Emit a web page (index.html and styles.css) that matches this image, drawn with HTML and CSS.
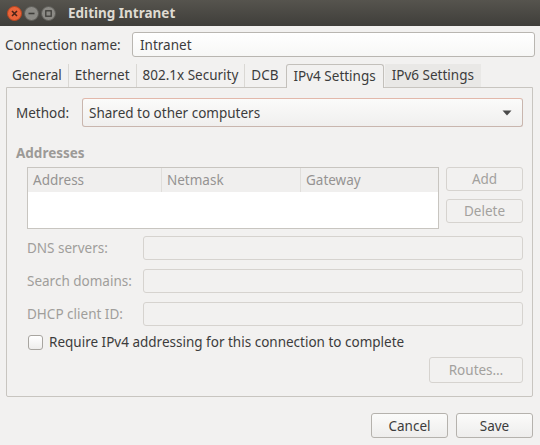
FILE: index.html
```html
<!DOCTYPE html>
<html lang="en">
  <head>
    <meta charset="UTF-8" />
    <title>Editing Intranet</title>
    <link rel="stylesheet" href="styles.css">
  </head>
  <body>
    <div class="window">
      <div class="titlebar">
        <div class="wm_buttons">
          <svg width="15" height="15" viewBox="0 0 15 15">
            <circle cx="7.5" cy="7.5" r="7" fill="#e9643a" stroke="#b9461f" />
            <path d="M5 5l5 5M10 5l-5 5" stroke="#4a2418" stroke-width="1.6" />
          </svg>
          <svg width="15" height="15" viewBox="0 0 15 15">
            <circle cx="7.5" cy="7.5" r="7" fill="#8b8a85" stroke="#5d5c57" />
            <path d="M4.5 7.5h6" stroke="#3e3d39" stroke-width="1.6" />
          </svg>
          <svg width="15" height="15" viewBox="0 0 15 15">
            <circle cx="7.5" cy="7.5" r="7" fill="#8b8a85" stroke="#5d5c57" />
            <rect x="4.8" y="4.8" width="5.4" height="5.4" fill="none" stroke="#3e3d39" stroke-width="1.3" />
          </svg>
        </div>
        <div class="title">Editing Intranet</div>
      </div>

      <div class="body">
        <div class="name_row">
          <span class="label">Connection name:</span>
          <div class="entry">Intranet</div>
        </div>

        <div class="tabs">
          <span class="tab">General</span>
          <span class="tab">Ethernet</span>
          <span class="tab">802.1x Security</span>
          <span class="tab last">DCB</span>
          <span class="tab active">IPv4 Settings</span>
          <span class="tab shaded">IPv6 Settings</span>
        </div>

        <div class="panel">
          <div class="method_row">
            <span class="label">Method:</span>
            <div class="combo">
              <span>Shared to other computers</span>
              <svg width="10" height="6" viewBox="0 0 10 6">
                <path d="M0.5 0.5h9l-4.5 5z" fill="#4a4a4a" />
              </svg>
            </div>
          </div>

          <div class="section_title">Addresses</div>

          <div class="addr_row">
            <div class="addr_table">
              <div class="addr_head">
                <span>Address</span>
                <span>Netmask</span>
                <span>Gateway</span>
              </div>
            </div>
            <div class="addr_buttons">
              <div class="btn disabled">Add</div>
              <div class="btn disabled">Delete</div>
            </div>
          </div>

          <div class="fields">
            <span class="dim">DNS servers:</span>
            <div class="entry disabled"></div>
            <span class="dim">Search domains:</span>
            <div class="entry disabled"></div>
            <span class="dim">DHCP client ID:</span>
            <div class="entry disabled"></div>
          </div>

          <div class="check_row">
            <span class="checkbox"></span>
            <span>Require IPv4 addressing for this connection to complete</span>
          </div>

          <div class="routes_row">
            <div class="btn disabled routes">Routes…</div>
          </div>
        </div>

        <div class="actions">
          <div class="btn">Cancel</div>
          <div class="btn">Save</div>
        </div>
      </div>
    </div>
  </body>
</html>
```

FILE: styles.css
```css
*,
*::before,
*::after {
  box-sizing: border-box;
}
html,
body {
  margin: 0;
  padding: 0;
}
body {
  font-family: "Noto Sans", "Open Sans", sans-serif;
  font-size: 13.5px;
  color: #3c3c3c;
  background: #f2f1f0;
}

.window {
  width: 540px;
  height: 445px;
  background: #f2f1f0;
}

.titlebar {
  height: 26px;
  background: linear-gradient(#56544e, #3f3e3a);
  display: flex;
  align-items: center;
  padding-left: 7px;
}
.wm_buttons {
  display: flex;
  gap: 2px;
}
.wm_buttons svg {
  display: block;
}
.title {
  margin-left: 12px;
  color: #dfdbd2;
  font-weight: bold;
  font-size: 13.5px;
}

.body {
  padding: 6px 5px 0 5px;
}

.name_row {
  display: flex;
  align-items: center;
}
.name_row .label {
  width: 127px;
}
.entry {
  flex: 1;
  height: 25px;
  border: 1px solid #b9b6b1;
  border-radius: 3px;
  background: linear-gradient(#ffffff, #f7f7f6);
  padding: 0 7px;
  display: flex;
  align-items: center;
}
.entry.disabled {
  background: #f2f1f0;
  border-color: #d6d3cf;
  height: 24px;
}

.tabs {
  display: flex;
  align-items: flex-end;
  height: 30px;
  padding-left: 1px;
}
.tab {
  padding: 0 6px;
  height: 23px;
  line-height: 22px;
  border-right: 1px solid #dad8d4;
}
.tab.last {
  border-right: none;
  margin-right: 1px;
}
.tab.active {
  border: 1px solid #c3c0bb;
  border-bottom: none;
  border-radius: 3px 3px 0 0;
  background: #f2f1f0;
  padding: 0 7px;
  position: relative;
  top: 1px;
  height: 24px;
}
.tab.shaded {
  border-right: none;
  background: #e9e8e6;
  padding: 0 7px;
  margin-left: 1px;
}

.panel {
  margin: 0 2px 0 1px;
  border: 1px solid #c8c5c0;
  border-radius: 0 0 2px 2px;
  height: 310px;
  padding: 10px 9px 0 9px;
}

.method_row {
  display: flex;
  align-items: center;
}
.method_row .label {
  width: 66px;
}
.combo {
  flex: 1;
  height: 29px;
  border: 1px solid #c9b6ae;
  border-top-color: #e2b8ab;
  border-radius: 3px;
  background: linear-gradient(#fbfbfa, #f0efee);
  display: flex;
  align-items: center;
  justify-content: space-between;
  padding: 0 10px 0 6px;
}

.section_title {
  margin-top: 17px;
  font-weight: bold;
  color: #9c9a97;
}

.addr_row {
  display: flex;
  gap: 7px;
  margin-top: 5px;
  padding-left: 11px;
}
.addr_table {
  width: 412px;
  height: 62px;
  border: 1px solid #c8c5c0;
  background: #ffffff;
}
.addr_head {
  display: grid;
  grid-template-columns: 134px 139px 1fr;
  height: 24px;
  background: #f0efee;
  color: #959392;
}
.addr_head span {
  display: flex;
  align-items: center;
  padding-left: 5px;
  border-right: 1px solid #e0dedb;
}
.addr_head span:last-child {
  border-right: none;
}
.addr_buttons {
  display: flex;
  flex-direction: column;
  gap: 8px;
}

.btn {
  height: 25px;
  border: 1px solid #b5b2ad;
  border-radius: 3px;
  background: linear-gradient(#fbfbfa, #eeedec);
  display: flex;
  align-items: center;
  justify-content: center;
}
.btn.disabled {
  width: 77px;
  height: 24px;
  border-color: #d6d3cf;
  background: #f2f1f0;
  color: #a3a19e;
}

.fields {
  display: grid;
  grid-template-columns: 116px 1fr;
  row-gap: 9px;
  align-items: center;
  margin-top: 7px;
  padding-left: 11px;
}
.dim {
  color: #a09e9b;
}

.check_row {
  display: flex;
  align-items: center;
  gap: 6px;
  margin-top: 7px;
  padding-left: 12px;
}
.checkbox {
  width: 15px;
  height: 15px;
  border: 1px solid #a8a5a0;
  border-radius: 3px;
  background: linear-gradient(#ffffff, #eeedec);
}

.routes_row {
  display: flex;
  justify-content: flex-end;
  margin-top: 6px;
}
.btn.disabled.routes {
  width: 94px;
  height: 26px;
}

.actions {
  display: flex;
  justify-content: flex-end;
  gap: 8px;
  margin-top: 16px;
  padding-right: 2px;
}
.actions .btn {
  width: 77px;
  height: 25px;
}
```
